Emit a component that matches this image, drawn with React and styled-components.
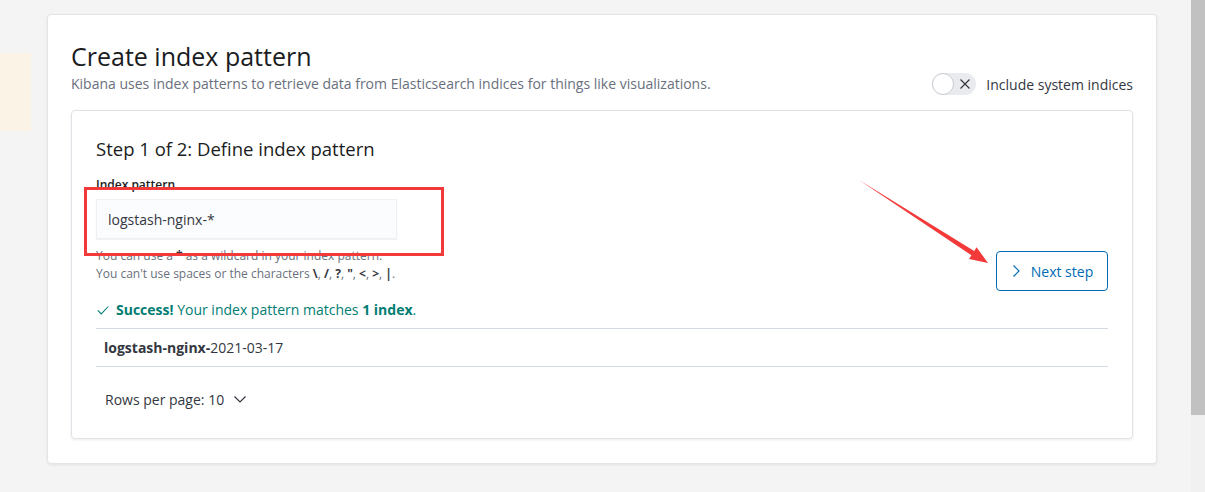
import React from "react";
import styled, { createGlobalStyle } from "styled-components";

const Global = createGlobalStyle`
  html, body { margin: 0; padding: 0; }
  body {
    font-family: "Open Sans", "Noto Sans", sans-serif;
    background: #f4f4f4;
    color: #343741;
    overflow: hidden;
  }
`;

const Page = styled.div`
  position: relative;
  display: flex;
  width: 1205px;
  height: 492px;
  background: #f4f4f4;
`;

const LeftRail = styled.div`
  width: 47px;
  flex-shrink: 0;
  padding-top: 53px;
`;

const Callout = styled.div`
  width: 31px;
  height: 78px;
  background: #fbf3e6;
`;

const Card = styled.div`
  margin-top: 14px;
  width: 1110px;
  height: 450px;
  box-sizing: border-box;
  flex-shrink: 0;
  background: #fff;
  border: 1px solid #e3e5e8;
  border-radius: 4px;
  box-shadow: 0 1px 3px rgba(0, 0, 0, 0.08);
  padding: 24px 23px;
`;

const Spacer = styled.div`
  flex: 1;
`;

const Scrollbar = styled.div`
  width: 14px;
  background: #f1f1f1;
  display: flex;
  flex-direction: column;
`;

const Thumb = styled.div`
  height: 415px;
  background: #c1c1c1;
`;

const Title = styled.h1`
  margin: 0;
  font-size: 25px;
  line-height: 34px;
  font-weight: 400;
  color: #1a1c21;
`;

const HeaderRow = styled.div`
  display: flex;
  justify-content: space-between;
  align-items: center;
  margin-bottom: 15px;
`;

const Subtitle = styled.p`
  margin: 0;
  font-size: 14px;
  line-height: 20px;
  color: #69707d;
`;

const SwitchWrap = styled.label`
  display: flex;
  align-items: center;
  gap: 10px;
  font-size: 14px;
  color: #343741;
`;

const Track = styled.span`
  position: relative;
  display: flex;
  align-items: center;
  justify-content: flex-end;
  width: 44px;
  height: 22px;
  border-radius: 11px;
  background: #e9ebee;
  padding-right: 5px;
  box-sizing: border-box;
`;

const Knob = styled.span`
  position: absolute;
  left: 0;
  top: 0;
  width: 22px;
  height: 22px;
  box-sizing: border-box;
  border-radius: 50%;
  background: #fff;
  border: 1px solid #c8ccd2;
`;

const Panel = styled.div`
  border: 1px solid #dfe2e6;
  border-radius: 4px;
  box-shadow: 0 1px 3px rgba(0, 0, 0, 0.08);
  padding: 22px 24px 24px 24px;
  height: 329px;
  box-sizing: border-box;
`;

const StepTitle = styled.h2`
  margin: 0;
  font-size: 18.5px;
  line-height: 32px;
  font-weight: 500;
  color: #1a1c21;
`;

const FormRow = styled.div`
  display: flex;
  justify-content: space-between;
  margin-top: 11px;
`;

const Field = styled.div`
  display: flex;
  flex-direction: column;
`;

const Label = styled.div`
  font-size: 12px;
  line-height: 18px;
  font-weight: 600;
  color: #1a1c21;
`;

const Input = styled.div`
  margin-top: 5px;
  width: 301px;
  height: 40px;
  box-sizing: border-box;
  padding: 0 11px;
  display: flex;
  align-items: center;
  background: #fbfcfd;
  border: 1px solid #eef0f3;
  box-shadow: 0 1px 1px rgba(0, 0, 0, 0.05);
  font-size: 14px;
  color: #343741;
`;

const Help = styled.div`
  margin-top: 8px;
  font-size: 12px;
  line-height: 18px;
  color: #69707d;
  b { color: #343741; }
`;

const NextButton = styled.button`
  margin-top: 75px;
  width: 112px;
  height: 40px;
  display: flex;
  align-items: center;
  justify-content: center;
  gap: 10px;
  background: #fff;
  border: 1px solid #006bb4;
  border-radius: 4px;
  color: #006bb4;
  font-family: inherit;
  font-size: 14px;
  padding: 0;
`;

const Success = styled.div`
  display: flex;
  align-items: center;
  gap: 6px;
  margin-top: 9px;
  font-size: 14px;
  line-height: 20px;
  color: #017d73;
  b { font-weight: 700; }
`;

const Table = styled.div`
  margin-top: 8px;
  border-top: 1px solid #d3dae6;
  border-bottom: 1px solid #d3dae6;
`;

const Row = styled.div`
  height: 37px;
  display: flex;
  align-items: center;
  padding-left: 8px;
  font-size: 14px;
  color: #343741;
  b { font-weight: 700; }
`;

const Pager = styled.div`
  margin-top: 16px;
  height: 32px;
  display: flex;
  align-items: center;
  gap: 9px;
  padding-left: 9px;
  font-size: 14px;
  color: #343741;
`;

const Annotations = styled.svg`
  position: absolute;
  left: 0;
  top: 0;
  pointer-events: none;
`;

const Check = () => (
  <svg width="14" height="14" viewBox="0 0 16 16">
    <path d="M2 8.5 L6 12.5 L14 4" fill="none" stroke="#017d73" strokeWidth="1.2" />
  </svg>
);

export default function App() {
  return (
    <>
      <Global />
      <Page>
        <LeftRail>
          <Callout />
        </LeftRail>
        <Card>
          <Title>Create index pattern</Title>
          <HeaderRow>
            <Subtitle>
              Kibana uses index patterns to retrieve data from Elasticsearch indices for things like visualizations.
            </Subtitle>
            <SwitchWrap>
              <Track>
                <Knob />
                <svg width="12" height="12" viewBox="0 0 12 12">
                  <path d="M1.5 1.5 L10.5 10.5 M10.5 1.5 L1.5 10.5" stroke="#343741" strokeWidth="1.2" />
                </svg>
              </Track>
              Include system indices
            </SwitchWrap>
          </HeaderRow>
          <Panel>
            <StepTitle>Step 1 of 2: Define index pattern</StepTitle>
            <FormRow>
              <Field>
                <Label>Index pattern</Label>
                <Input>logstash-nginx-*</Input>
                <Help>
                  You can use a <b>*</b> as a wildcard in your index pattern.
                  <br />
                  You can't use spaces or the characters <b>\</b>, <b>/</b>, <b>?</b>, <b>"</b>, <b>&lt;</b>, <b>&gt;</b>, <b>|</b>.
                </Help>
              </Field>
              <NextButton>
                <svg width="10" height="14" viewBox="0 0 10 14">
                  <path d="M2.5 1.5 L8 7 L2.5 12.5" fill="none" stroke="#006bb4" strokeWidth="1.2" />
                </svg>
                Next step
              </NextButton>
            </FormRow>
            <Success>
              <Check />
              <span>
                <b>Success!</b> Your index pattern matches <b>1 index</b>.
              </span>
            </Success>
            <Table>
              <Row>
                <b>logstash-nginx-</b>2021-03-17
              </Row>
            </Table>
            <Pager>
              Rows per page: 10
              <svg width="14" height="10" viewBox="0 0 14 10">
                <path d="M1.5 2.5 L7 8 L12.5 2.5" fill="none" stroke="#343741" strokeWidth="1.2" />
              </svg>
            </Pager>
          </Panel>
        </Card>
        <Spacer />
        <Scrollbar>
          <Thumb />
        </Scrollbar>
        <Annotations width="1205" height="492">
          <rect x="85.5" y="188.5" width="357" height="66" fill="none" stroke="#f23a3a" strokeWidth="3" />
          <polygon
            points="859,180 974.2,251.1 976.6,247.3 988,263 969,259.1 971.4,255.3"
            fill="#f23a3a"
          />
        </Annotations>
      </Page>
    </>
  );
}
